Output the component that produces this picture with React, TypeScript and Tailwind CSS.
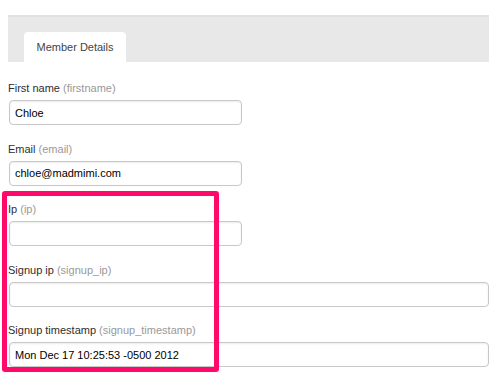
import React from 'react';

interface FieldProps {
  label: string;
  name: string;
  value: string;
  wide?: boolean;
}

const Field: React.FC<FieldProps> = ({ label, name, value, wide }) => (
  <div className="mb-[14.5px]">
    <div className="text-[11px] leading-[19px] text-[#2e2e2e]">
      {label} <span className="text-[#999]">({name})</span>
    </div>
    <input
      readOnly
      value={value}
      className={`mt-[2px] ml-[1px] block h-[25px] rounded-[4px] border border-[#c8c8c8] bg-white px-[5px] text-[11px] text-black shadow-[inset_0_1px_2px_rgba(0,0,0,0.08)] outline-none ${
        wide ? 'w-[480px]' : 'w-[233px]'
      }`}
    />
  </div>
);

const App: React.FC = () => {
  return (
    <div className="relative h-[378px] w-[500px] bg-white font-['Liberation_Sans',Arial,sans-serif]">
      <div className="pt-[15px] pl-[8px]">
        {/* tab strip */}
        <div className="flex h-[47px] w-[481px] items-end border-t-2 border-[#e1e1e1] bg-[#e8e8e8] pl-[16px]">
          <div className="flex h-[30px] w-[102px] items-center justify-center rounded-t-[4px] bg-white text-[11px] text-[#444]">
            Member Details
          </div>
        </div>

        <div className="pt-[17px]">
          <Field label="First name" name="firstname" value="Chloe" />
          <Field label="Email" name="email" value="chloe@madmimi.com" />
          <Field label="Ip" name="ip" value="" />
          <Field label="Signup ip" name="signup_ip" value="" wide />
          <Field label="Signup timestamp" name="signup_timestamp" value="Mon Dec 17 10:25:53 -0500 2012" wide />
        </div>
      </div>

      {/* highlight annotation */}
      <div className="pointer-events-none absolute left-[2px] top-[191px] h-[181px] w-[217px] rounded-[3px] border-[5px] border-[#ff0a6a]" />
    </div>
  );
};

export default App;
